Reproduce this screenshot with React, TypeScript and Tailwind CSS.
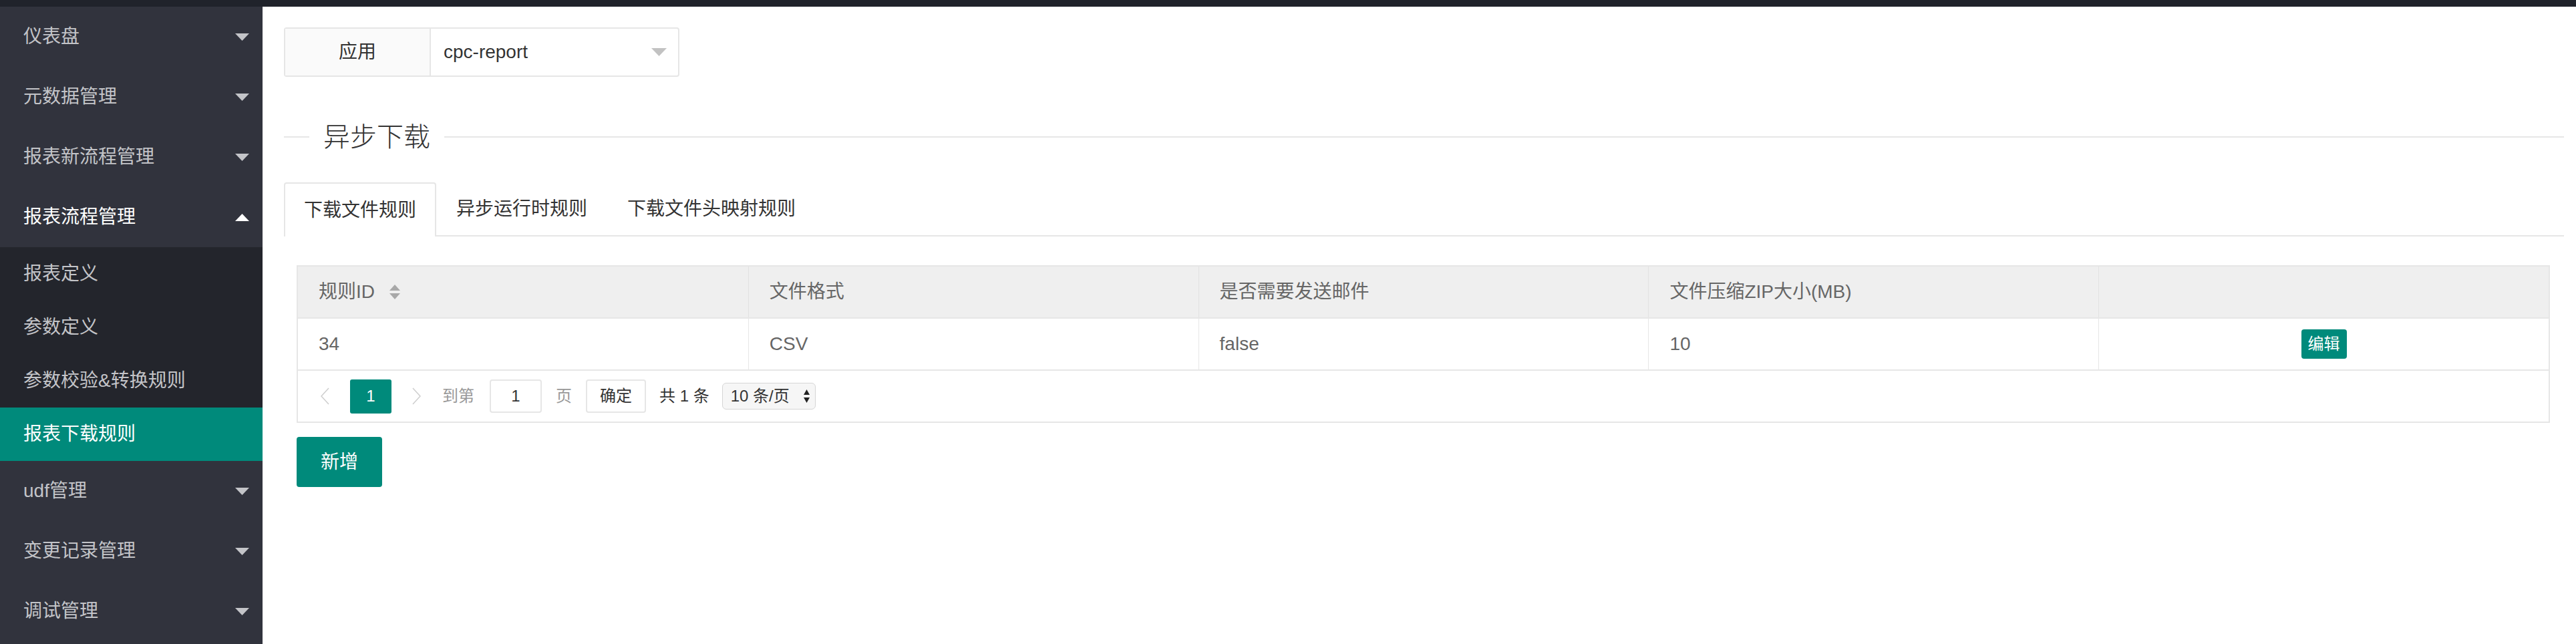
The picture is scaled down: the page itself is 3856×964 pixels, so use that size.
import React from "react";

type SubItem = { label: string; active?: boolean };
type NavItem = { label: string; open?: boolean; children?: SubItem[] };

const nav: NavItem[] = [
  { label: "仪表盘" },
  { label: "元数据管理" },
  { label: "报表新流程管理" },
  {
    label: "报表流程管理",
    open: true,
    children: [
      { label: "报表定义" },
      { label: "参数定义" },
      { label: "参数校验&转换规则" },
      { label: "报表下载规则", active: true },
    ],
  },
  { label: "udf管理" },
  { label: "变更记录管理" },
  { label: "调试管理" },
];

const columns = ["规则ID", "文件格式", "是否需要发送邮件", "文件压缩ZIP大小(MB)", ""];
const rows = [{ id: "34", format: "CSV", mail: "false", zip: "10" }];

// small triangle used by the nav tree and the select box
function Caret({ up, color }: { up?: boolean; color: string }) {
  return (
    <svg width="21" height="11" viewBox="0 0 21 11" className="shrink-0">
      <polygon points={up ? "0,11 10.5,0 21,11" : "0,0 21,0 10.5,11"} fill={color} />
    </svg>
  );
}

function SortIcon() {
  return (
    <svg width="20" height="24" viewBox="0 0 20 24" className="ml-[20px] shrink-0">
      <polygon points="2,10 10,1 18,10" fill="#a8a8a8" />
      <polygon points="2,14 10,23 18,14" fill="#a8a8a8" />
    </svg>
  );
}

function Chevron({ right }: { right?: boolean }) {
  return (
    <svg width="13" height="26" viewBox="0 0 13 26" className="shrink-0">
      <polyline
        points={right ? "1,1 12,13 1,25" : "12,1 1,13 12,25"}
        fill="none"
        stroke="#cfcfcf"
        strokeWidth="1.6"
      />
    </svg>
  );
}

function Sidebar() {
  return (
    <aside className="w-[393px] shrink-0 bg-[#31333d] overflow-hidden">
      {nav.map((item) => (
        <div key={item.label}>
          <div
            className={`flex h-[90px] items-center justify-between pl-[35px] pr-[20px] text-[28px] ${
              item.open ? "text-white" : "text-[#c3c4c8]"
            }`}
          >
            <span>{item.label}</span>
            <Caret up={item.open} color={item.open ? "#ffffff" : "#c3c4c8"} />
          </div>
          {item.open && item.children && (
            <div className="bg-[#23252c]">
              {item.children.map((child) => (
                <div
                  key={child.label}
                  className={`flex h-[80px] items-center pl-[35px] text-[28px] ${
                    child.active ? "bg-[#008a7b] text-white" : "text-[#c3c4c8]"
                  }`}
                >
                  {child.label}
                </div>
              ))}
            </div>
          )}
        </div>
      ))}
    </aside>
  );
}

export default function App() {
  return (
    <div className="flex h-[964px] w-full flex-col bg-white font-['Liberation_Sans','Noto_Sans_CJK_SC',sans-serif]">
      {/* header strip */}
      <div className="h-[10px] shrink-0 bg-[#20232b]" />

      <div className="flex min-h-0 flex-1">
        <Sidebar />

        <main className="min-w-0 flex-1 pl-[32px] pr-[18px] pt-[31px]">
          {/* app selector */}
          <div className="flex h-[74px] w-[592px] rounded-[4px] border-2 border-[#e6e6e6]">
            <div className="flex w-[218px] items-center justify-center border-r-2 border-[#e6e6e6] bg-[#fafafa] text-[28px] text-[#333]">
              应用
            </div>
            <div className="flex flex-1 items-center justify-between pl-[19px] pr-[17px] text-[28px] text-[#333]">
              <span>cpc-report</span>
              <svg width="23" height="12" viewBox="0 0 23 12">
                <polygon points="0,0 23,0 11.5,12" fill="#c2c2c2" />
              </svg>
            </div>
          </div>

          {/* field title */}
          <div className="mt-[65px] flex h-[50px] items-center">
            <div className="h-[2px] w-[38px] bg-[#e6e6e6]" />
            <span className="px-[21px] text-[40px] font-light leading-none text-[#333]">异步下载</span>
            <div className="h-[2px] flex-1 bg-[#e6e6e6]" />
          </div>

          {/* tabs */}
          <div className="mt-[43px] flex h-[81px] items-start border-b-2 border-[#e6e6e6] text-[28px] text-[#333]">
            <div className="-mb-[2px] flex h-[81px] items-center rounded-t-[4px] border-x-2 border-t-2 border-[#e6e6e6] bg-white px-[28px]">
              下载文件规则
            </div>
            <div className="flex h-[79px] items-center px-[30px]">异步运行时规则</div>
            <div className="flex h-[79px] items-center px-[30px]">下载文件头映射规则</div>
          </div>

          <div className="pl-[19px] pr-[21px] pt-[43px]">
            {/* table */}
            <div className="border-2 border-[#e6e6e6] text-[28px] text-[#666]">
              <div className="grid h-[78px] grid-cols-5 border-b-2 border-[#e6e6e6] bg-[#efefef]">
                {columns.map((col, i) => (
                  <div
                    key={i}
                    className={`flex items-center px-[31px] ${i > 0 ? "border-l border-[#e2e2e2]" : ""}`}
                  >
                    <span>{col}</span>
                    {i === 0 && <SortIcon />}
                  </div>
                ))}
              </div>
              {rows.map((r) => (
                <div key={r.id} className="grid h-[78px] grid-cols-5 border-b-2 border-[#e6e6e6]">
                  <div className="flex items-center px-[31px]">{r.id}</div>
                  <div className="flex items-center border-l border-[#e6e6e6] px-[31px]">{r.format}</div>
                  <div className="flex items-center border-l border-[#e6e6e6] px-[31px]">{r.mail}</div>
                  <div className="flex items-center border-l border-[#e6e6e6] px-[31px]">{r.zip}</div>
                  <div className="flex items-center justify-center border-l border-[#e6e6e6]">
                    <button className="flex h-[44px] w-[68px] items-center justify-center rounded-[4px] bg-[#008a7b] text-[24px] text-white">
                      编辑
                    </button>
                  </div>
                </div>
              ))}

              {/* pager */}
              <div className="flex h-[76px] items-center pl-[34px] text-[24px] text-[#333]">
                <Chevron />
                <div className="ml-[31px] flex h-[51px] w-[62px] items-center justify-center rounded-[3px] bg-[#008a7b] text-white">
                  1
                </div>
                <div className="ml-[31px]">
                  <Chevron right />
                </div>
                <span className="ml-[32px] text-[#999]">到第</span>
                <div className="ml-[23px] flex h-[50px] w-[78px] items-center justify-center rounded-[4px] border-2 border-[#e6e6e6]">
                  1
                </div>
                <span className="ml-[21px] text-[#999]">页</span>
                <button className="ml-[21px] flex h-[50px] w-[90px] items-center justify-center rounded-[4px] border-2 border-[#e6e6e6] bg-white">
                  确定
                </button>
                <span className="ml-[20px]">共 1 条</span>
                <div className="ml-[19px] flex h-[40px] w-[140px] items-center justify-between rounded-[6px] border border-[#d6d6d6] bg-[#f6f6f6] pl-[12px] pr-[8px]">
                  <span>10 条/页</span>
                  <svg width="9" height="22" viewBox="0 0 9 22">
                    <polygon points="0,9 4.5,1 9,9" fill="#222" />
                    <polygon points="0,13 4.5,21 9,13" fill="#222" />
                  </svg>
                </div>
              </div>
            </div>

            <button className="mt-[21px] flex h-[75px] w-[128px] items-center justify-center rounded-[4px] bg-[#008a7b] text-[28px] text-white">
              新增
            </button>
          </div>
        </main>
      </div>
    </div>
  );
}
